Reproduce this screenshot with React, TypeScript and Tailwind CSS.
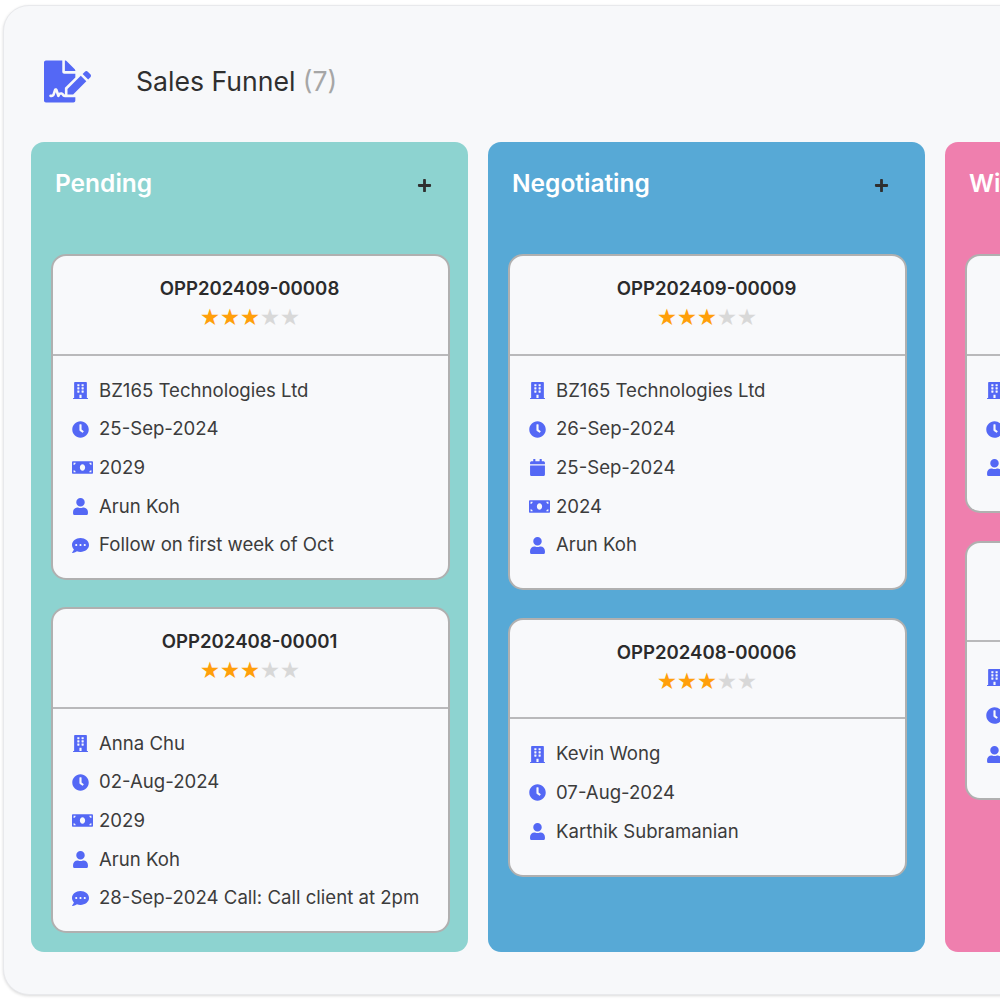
import React from 'react';
import { FaBuilding, FaCalendar, FaClock, FaCommentDots, FaFileSignature, FaMoneyBill, FaPlus, FaUser } from 'react-icons/fa';

type RowKind = 'company' | 'clock' | 'calendar' | 'money' | 'user' | 'comment';

interface Deal {
  id: string;
  rows: [RowKind, string][];
}

interface Stage {
  name: string;
  bg: string;
  deals: Deal[];
}

const icons = {
  company: FaBuilding,
  clock: FaClock,
  calendar: FaCalendar,
  money: FaMoneyBill,
  user: FaUser,
  comment: FaCommentDots,
};

const stages: Stage[] = [
  {
    name: 'Pending',
    bg: 'bg-[#8dd3d0]',
    deals: [
      {
        id: 'OPP202409-00008',
        rows: [
          ['company', 'BZ165 Technologies Ltd'],
          ['clock', '25-Sep-2024'],
          ['money', '2029'],
          ['user', 'Arun Koh'],
          ['comment', 'Follow on first week of Oct'],
        ],
      },
      {
        id: 'OPP202408-00001',
        rows: [
          ['company', 'Anna Chu'],
          ['clock', '02-Aug-2024'],
          ['money', '2029'],
          ['user', 'Arun Koh'],
          ['comment', '28-Sep-2024 Call: Call client at 2pm'],
        ],
      },
    ],
  },
  {
    name: 'Negotiating',
    bg: 'bg-[#57a9d6]',
    deals: [
      {
        id: 'OPP202409-00009',
        rows: [
          ['company', 'BZ165 Technologies Ltd'],
          ['clock', '26-Sep-2024'],
          ['calendar', '25-Sep-2024'],
          ['money', '2024'],
          ['user', 'Arun Koh'],
        ],
      },
      {
        id: 'OPP202408-00006',
        rows: [
          ['company', 'Kevin Wong'],
          ['clock', '07-Aug-2024'],
          ['user', 'Karthik Subramanian'],
        ],
      },
    ],
  },
  {
    name: 'Win',
    bg: 'bg-[#ef7fae]',
    deals: [
      {
        id: 'OPP202409-00007',
        rows: [
          ['company', 'BZ165 Technologies Ltd'],
          ['clock', '20-Sep-2024'],
          ['user', 'Arun Koh'],
        ],
      },
      {
        id: 'OPP202408-00004',
        rows: [
          ['company', 'Kevin Wong'],
          ['clock', '05-Aug-2024'],
          ['user', 'Arun Koh'],
        ],
      },
    ],
  },
];

const DealCard: React.FC<{ deal: Deal; first: boolean }> = ({ deal, first }) => {
  const endsWithComment = deal.rows[deal.rows.length - 1][0] === 'comment';
  return (
    <div className="rounded-[15px] border-2 border-[#b0b0b0] bg-[#f8f9fb]">
      <div className={`border-b-2 border-[#b9b9bb] pt-[19px] pr-[1.5px] text-center ${first ? 'h-[100.5px]' : 'h-[99.5px]'}`}>
        <div className="text-[18.6px] leading-[27px] font-semibold text-[#2b2b2b]">{deal.id}</div>
        <div className="mt-[4px] flex justify-center text-[20px] leading-[24px]">
          {[0, 1, 2, 3, 4].map((i) => (
            <span key={i} className={`w-[20px] ${i < 3 ? 'text-[#ff9f0a]' : 'text-[#d8d8d8]'}`}>★</span>
          ))}
        </div>
      </div>
      <div className={`flex flex-col pt-[15.5px] pl-[19px] ${endsWithComment ? 'pb-[13.5px]' : 'pb-[24px]'}`}>
        {deal.rows.map(([kind, text], i) => {
          const Icon = icons[kind];
          return (
            <div key={i} className="flex h-[38.6px] items-center text-[18.6px] text-[#3c3c3c]">
              <span className="flex w-[27px] shrink-0 text-[#5468f5]">
                <Icon size={kind === 'money' ? 21 : 17} />
              </span>
              <span className="whitespace-nowrap">{text}</span>
            </div>
          );
        })}
      </div>
    </div>
  );
};

export default function App() {
  return (
    <div className="h-[1000px] w-[1000px] overflow-hidden bg-white pt-[5px] pl-[3px] font-['Inter',sans-serif]">
      <div className="flex h-[990px] w-[1400px] flex-col rounded-[26px] border border-[#e8e9ec] bg-[#f7f8fa] shadow-[0_1px_3px_rgba(0,0,0,0.15)]">
        <div className="flex h-[136px] shrink-0 items-start pt-[52px] pl-[40px]">
          <FaFileSignature className="text-[#5468f5]" size={47} />
          <h1 className="mt-[1px] ml-[45px] text-[26.6px] leading-[44px] text-[#2f2f2f]">
            Sales Funnel <span className="text-[#a6a6a6]">(7)</span>
          </h1>
        </div>
        <div className="flex gap-[20px] pl-[27px]">
          {stages.map((stage) => (
            <div key={stage.name} className={`h-[810px] w-[437px] shrink-0 rounded-[13px] pr-[18.5px] pl-[20px] ${stage.bg}`}>
              <div className="flex h-[111.5px] items-start justify-between pt-[22.5px] pr-[18px] pl-[4px]">
                <span className="text-[24.5px] leading-[36px] font-semibold text-white">{stage.name}</span>
                <FaPlus className="mt-[13px] text-[#2f2f2f]" size={15} />
              </div>
              <div className="flex flex-col gap-[27.5px]">
                {stage.deals.map((deal, i) => (
                  <DealCard key={deal.id} deal={deal} first={i === 0} />
                ))}
              </div>
            </div>
          ))}
        </div>
      </div>
    </div>
  );
}
